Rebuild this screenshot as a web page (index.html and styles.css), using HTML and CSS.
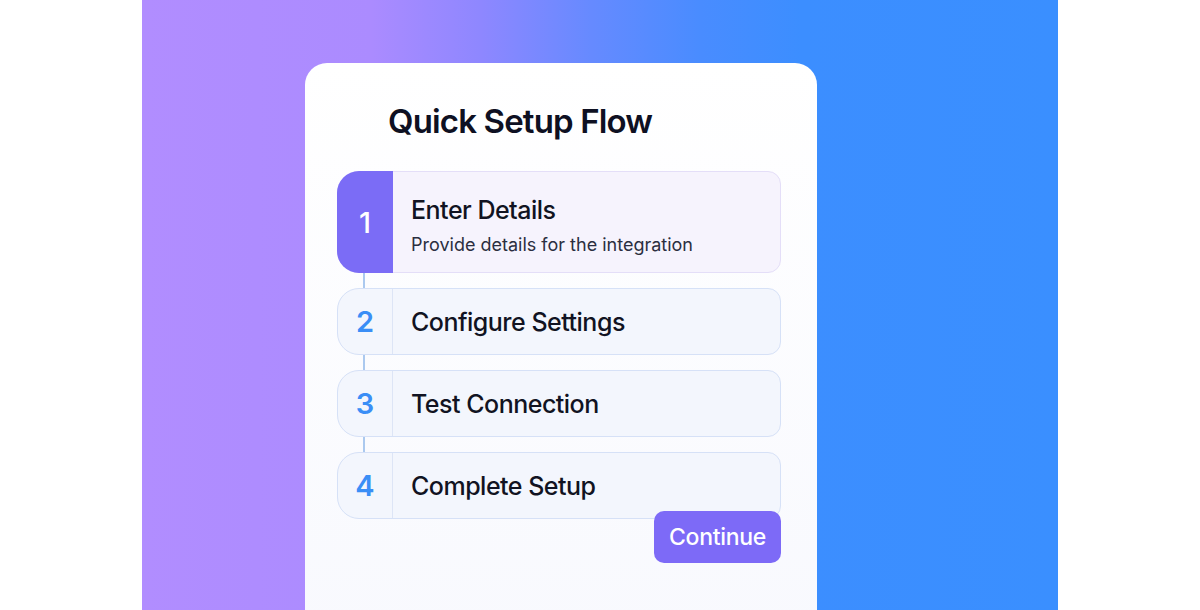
FILE: index.html
```html
<!DOCTYPE html>
<html lang="en">
  <head>
    <meta charset="UTF-8">
    <meta name="viewport" content="width=device-width, initial-scale=1.0">
    <title>Quick Setup Flow</title>
    <link rel="stylesheet" href="styles.css">
  </head>
  <body>
    <div class="stage">
      <div class="card">
        <h2 class="card-title">Quick Setup Flow</h2>
        <div class="steps">
          <div class="step active">
            <div class="step-num">1</div>
            <div class="step-body">
              <h3>Enter Details</h3>
              <p>Provide details for the integration</p>
            </div>
          </div>
          <div class="link"></div>
          <div class="step">
            <div class="step-num">2</div>
            <div class="step-body">
              <h3>Configure Settings</h3>
            </div>
          </div>
          <div class="link"></div>
          <div class="step">
            <div class="step-num">3</div>
            <div class="step-body">
              <h3>Test Connection</h3>
            </div>
          </div>
          <div class="link"></div>
          <div class="step">
            <div class="step-num">4</div>
            <div class="step-body">
              <h3>Complete Setup</h3>
            </div>
          </div>
        </div>
        <div class="actions">
          <button class="btn">Continue</button>
        </div>
      </div>
    </div>
  </body>
</html>
```

FILE: styles.css
```css
body {
  margin: 0;
  background: #ffffff;
  font-family: Inter, "Noto Sans", sans-serif;
}
.stage {
  width: 916px;
  height: 610px;
  margin: 0 auto;
  padding-top: 63px;
  box-sizing: border-box;
  overflow: hidden;
  background: linear-gradient(90deg, #b18dff 0%, #ab8bff 25%, #8e87ff 37%, #668aff 49%, #498cff 61%, #3c8eff 72%, #3a8fff 100%);
}
.card {
  width: 512px;
  height: 580px;
  margin-left: 163px;
  box-sizing: border-box;
  padding: 36px 36px 0 32px;
  border-radius: 22px 22px 0 0;
  background: linear-gradient(180deg, #ffffff 0%, #f8f9fe 100%);
}
.card-title {
  margin: 0 0 28px 51px;
  font-size: 33px;
  font-weight: 600;
  letter-spacing: -0.85px;
  line-height: 44px;
  color: #0e1022;
}
.steps {
  display: flex;
  flex-direction: column;
}
.step {
  display: flex;
  border: 1px solid #d6e1f7;
  border-radius: 22px 13px 13px 22px;
  background: #f3f6fd;
  height: 67px;
  box-sizing: border-box;
}
.step-num {
  width: 54px;
  flex-shrink: 0;
  display: flex;
  align-items: center;
  justify-content: center;
  border-right: 1px solid #dde5f6;
  font-size: 29px;
  font-weight: 600;
  color: #3a8ef6;
}
.step-body {
  flex: 1;
  display: flex;
  flex-direction: column;
  justify-content: center;
  padding-left: 18px;
}
.step-body h3 {
  margin: 0;
  font-size: 25px;
  font-weight: 550;
  letter-spacing: -0.5px;
  color: #111322;
}
.step-body p {
  margin: 9px 0 0;
  font-size: 18px;
  color: #2b2e40;
}
.step.active {
  height: 102px;
  border-color: #e4def8;
  background: #f6f3fd;
}
.step.active .step-num {
  margin: -1px 0 -1px -1px;
  width: 56px;
  border-right: none;
  border-radius: 22px 0 0 22px;
  background: #7b6cf6;
  color: #ffffff;
  font-weight: 500;
}
.step.active .step-body {
  padding-top: 6px;
}
.link {
  width: 2px;
  height: 15px;
  margin-left: 26px;
  background: #abc9ef;
}
.actions {
  display: flex;
  justify-content: flex-end;
  margin-top: -8px;
}
.btn {
  width: 127px;
  height: 52px;
  border: none;
  border-radius: 10px;
  background: #7d6af7;
  color: #ffffff;
  font-family: Inter, "Noto Sans", sans-serif;
  font-size: 23px;
  font-weight: 500;
  letter-spacing: -0.3px;
}
```
